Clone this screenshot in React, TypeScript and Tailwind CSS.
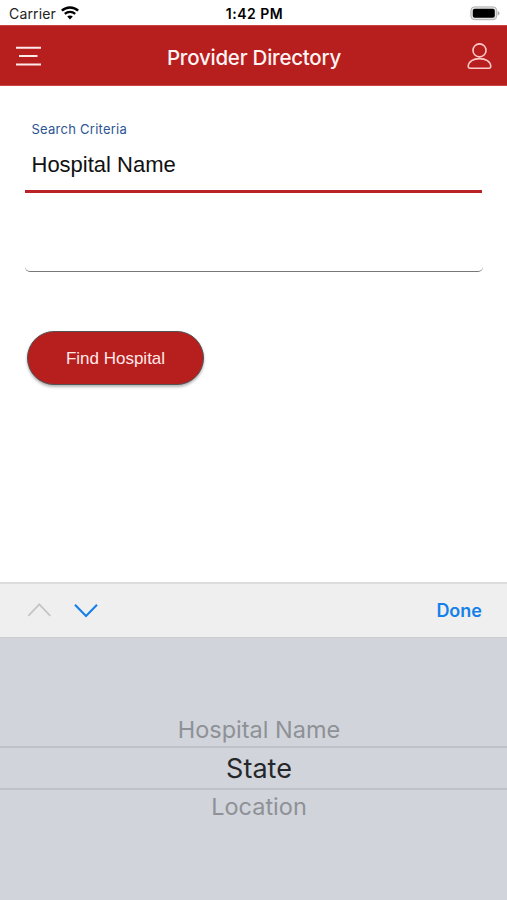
const criteria = ['Hospital Name', 'State', 'Location'];

export default function App() {
  return (
    <div className="flex h-[900px] w-[507px] flex-col overflow-hidden bg-white font-['Inter',sans-serif]">
      <StatusBar />
      <Header />
      <main className="flex h-[496px] flex-col items-start px-[25px]">
        <SearchForm />
      </main>
      <KeyboardToolbar />
      <Picker />
    </div>
  );
}

function StatusBar() {
  return (
    <div className="grid h-[25px] shrink-0 grid-cols-3 items-center pt-[3px] pr-[7px] pl-[9px] text-black">
      <div className="flex items-center gap-[5px]">
        <span className="text-[14px] leading-none tracking-[0.15px] text-[#222]">Carrier</span>
        <svg className="mb-[2px] h-[14px] w-[18px]" viewBox="0 0 18 14" fill="none" stroke="#000">
          <path d="M0.8 4.6C5.4 0.3 12.6 0.3 17.2 4.6" strokeWidth="2.5" />
          <path d="M3.8 7.9C6.8 5.3 11.2 5.3 14.2 7.9" strokeWidth="2.3" />
          <path d="M9 13.4L6.2 10.5C7.8 9.1 10.2 9.1 11.8 10.5Z" fill="#000" stroke="none" />
        </svg>
      </div>
      <span className="text-center text-[14px] leading-none font-semibold tracking-[0.5px]">1:42 PM</span>
      <svg className="mb-[2px] h-[15px] w-[30px] justify-self-end" viewBox="0 0 30 15">
        <rect x="0.9" y="0.9" width="25.8" height="12.8" rx="3.6" fill="#e4e4e4" stroke="#b0b0b0" />
        <rect x="2.8" y="2.8" width="22" height="9" rx="2" fill="#000" />
        <path d="M27.7 5.2C30.2 5.6 30.2 9.1 27.7 9.5Z" fill="#aaa" />
      </svg>
    </div>
  );
}

function Header() {
  return (
    <header className="flex h-[61px] shrink-0 items-center justify-between border-y border-[#c94442] bg-[#b71e1e] px-[15px] text-white">
      <button aria-label="Menu">
        <svg className="h-[22px] w-[27px]" viewBox="0 0 27 22" stroke="#ffe9e9" strokeWidth="2">
          <path d="M1 2.8H26M4 11.1H22.5M1 19.6H26" />
        </svg>
      </button>
      <h1 className="mt-[6px] mr-px text-[20.5px] leading-none font-medium tracking-[-0.23px] text-[#fff3f3]">
        Provider Directory
      </h1>
      <button aria-label="Account">
        <svg className="h-[28px] w-[25px]" viewBox="0 0 25 28" fill="none" stroke="#ffc9c9" strokeWidth="1.6">
          <circle cx="12.5" cy="8.4" r="6.5" />
          <path d="M2.8 26.2H22.2Q23.8 26.2 23.8 24.6C23.5 19.5 18.7 16.6 12.5 16.6S1.5 19.5 1.2 24.6Q1.2 26.2 2.8 26.2Z" />
        </svg>
      </button>
    </header>
  );
}

function SearchForm() {
  return (
    <>
      <div className="flex h-[107px] w-full flex-col border-b-[3px] border-[#b92325] pl-[6.5px]">
        <label className="mt-[36px] text-[13px] leading-[15px] tracking-[0.25px] text-[#2c5593]">Search Criteria</label>
        <div className="mt-[15px] font-['Liberation_Sans',sans-serif] text-[22px] leading-[26px] text-[#111]">
          {criteria[0]}
        </div>
      </div>
      <div className="h-[79px] w-[458px] rounded-[5px] border-b border-[#777]" />
      <button className="mt-[59px] ml-[2px] h-[54px] w-[177px] rounded-[27px] border border-[#535353] bg-[#b71e1e] pt-[2px] font-['Liberation_Sans',sans-serif] text-[17px] text-[#ffe9e9] shadow-[0_2px_3px_rgba(0,0,0,0.3)]">
        Find Hospital
      </button>
    </>
  );
}

function KeyboardToolbar() {
  return (
    <div className="flex h-[55px] shrink-0 items-center justify-between border-t-2 border-[#dcdcdd] bg-[#efeff0] pr-[25px] pl-[27px]">
      <div className="mb-[2px] flex gap-[22px]">
        <svg className="h-[16px] w-[25px]" viewBox="0 0 25 16" fill="none" stroke="#c5c5c6" strokeWidth="1.8">
          <path d="M1.3 13.8L12.3 2.3L23.3 13.8" />
        </svg>
        <svg className="h-[16px] w-[25px]" viewBox="0 0 25 16" fill="none" stroke="#1680e9" strokeWidth="2.1">
          <path d="M1 2.7L12 14L23 2.7" />
        </svg>
      </div>
      <button className="text-[18px] leading-none font-semibold text-[#1680e9]">Done</button>
    </div>
  );
}

function Picker() {
  return (
    <div className="flex h-[263px] flex-col items-center border-t border-[#cbcdd0] bg-[#d1d4db] pt-[76px]">
      <div className="flex h-[32px] items-center pl-[11px] text-[23.5px] text-[#8e9196]">{criteria[0]}</div>
      <div className="flex h-[44px] w-full items-center justify-center border-y-2 border-[#bec1c5] pt-[2px] pl-[11px] text-[27px] text-[#25272a]">
        {criteria[1]}
      </div>
      <div className="flex h-[32px] items-center pt-[2px] pl-[11px] text-[23.5px] text-[#8e9196]">{criteria[2]}</div>
    </div>
  );
}
